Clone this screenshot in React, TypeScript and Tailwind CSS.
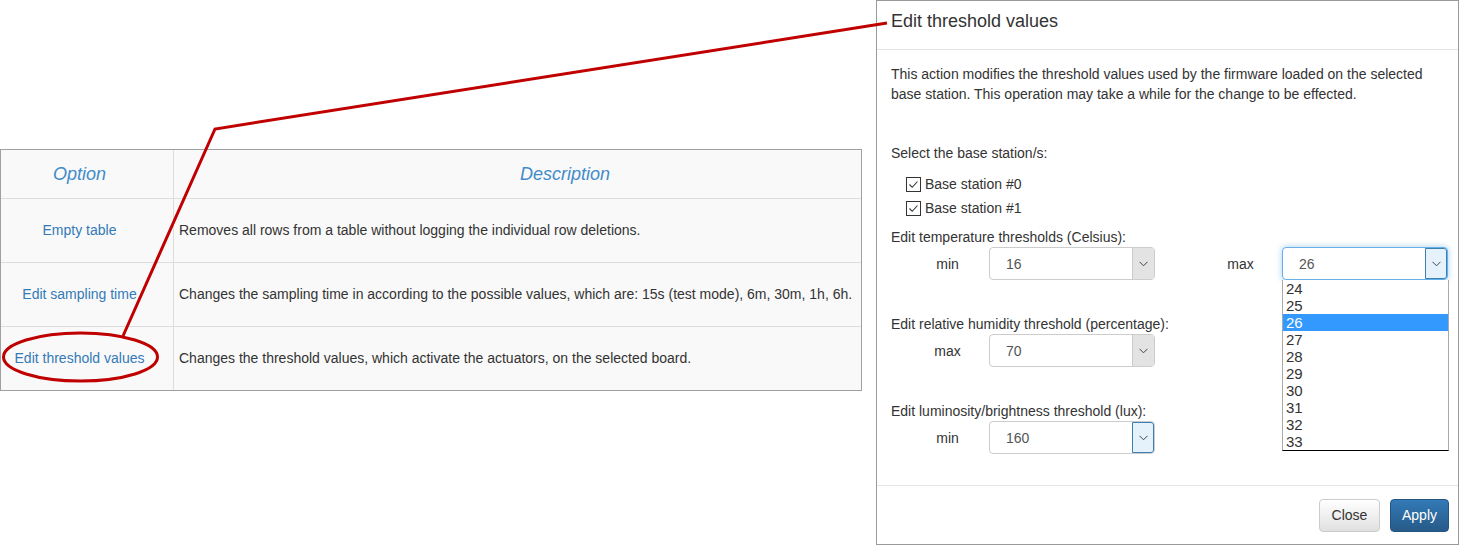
const rows = [
  {
    option: "Empty table",
    description: "Removes all rows from a table without logging the individual row deletions.",
  },
  {
    option: "Edit sampling time",
    description:
      "Changes the sampling time in according to the possible values, which are: 15s (test mode), 6m, 30m, 1h, 6h.",
  },
  {
    option: "Edit threshold values",
    description: "Changes the threshold values, which activate the actuators, on the selected board.",
  },
];

const maxOptions = ["24", "25", "26", "27", "28", "29", "30", "31", "32", "33"];

function CheckBox({ label }: { label: string }) {
  return (
    <div className="h-[24px] flex items-center pl-[15px]">
      <span className="w-[15px] h-[15px] border border-[#333] bg-white flex items-center justify-center">
        <svg width="11" height="11" viewBox="0 0 11 11">
          <path d="M1.5 5.5 L4.2 8.3 L9.5 2.5" fill="none" stroke="#333" strokeWidth="1.1" />
        </svg>
      </span>
      <span className="ml-[4px] text-[14px] text-[#333]">{label}</span>
    </div>
  );
}

function Select({
  value,
  state = "normal",
  children,
}: {
  value: string;
  state?: "normal" | "focus" | "hover";
  children?: React.ReactNode;
}) {
  const box =
    state === "focus"
      ? "border-[#66afe9] shadow-[0_0_6px_rgba(102,175,233,0.6)]"
      : "border-[#ccc]";
  const arrow =
    state === "normal"
      ? "bg-[#e3e3e3] border-l border-[#ccc]"
      : "bg-[#e5f1fb] border border-[#3c7fb1] rounded-r-[3px]";
  return (
    <div className={`relative shrink-0 w-[166px] h-[33px] border rounded-[4px] bg-white flex ${box}`}>
      <div className="flex-1 flex items-center pl-[16px] text-[14px] text-[#555]">{value}</div>
      <div className={`w-[22px] flex items-center justify-center ${arrow}`}>
        <svg width="9" height="6" viewBox="0 0 9 6">
          <path d="M0.5 0.8 L4.5 4.8 L8.5 0.8" fill="none" stroke="#444" strokeWidth="1" />
        </svg>
      </div>
      {children}
    </div>
  );
}

export default function App() {
  return (
    <div className="relative w-[1459px] h-[545px] overflow-hidden bg-white flex items-start font-['Liberation_Sans',Arial,sans-serif]">
      {/* options table */}
      <div className="mt-[149px] w-[862px] shrink-0 border border-[#a0a0a0] bg-[#f9f9f9] grid grid-cols-[173px_1fr]">
        <div className="h-[49px] border-b border-r border-[#ddd] flex items-center justify-center pr-[15px]">
          <span className="italic text-[18px] text-[#428bca]">Option</span>
        </div>
        <div className="h-[49px] border-b border-[#ddd] flex items-center pl-[346px]">
          <span className="italic text-[18px] text-[#428bca]">Description</span>
        </div>
        {rows.map((row, i) => {
          const last = i === rows.length - 1;
          return [
            <div
              key={`o${i}`}
              className={`${last ? "h-[63px]" : "h-[64px] border-b"} border-r border-[#ddd] flex items-center justify-center pr-[15px]`}
            >
              <span className="text-[14px] text-[#337ab7] whitespace-nowrap">{row.option}</span>
            </div>,
            <div
              key={`d${i}`}
              className={`${last ? "h-[63px]" : "h-[64px] border-b"} border-[#ddd] flex items-center pl-[5px]`}
            >
              <span className="text-[14px] text-[#333] whitespace-nowrap">{row.description}</span>
            </div>,
          ];
        })}
      </div>

      {/* modal */}
      <div className="ml-[14px] w-[583px] shrink-0 h-[545px] border border-[#999] bg-white flex flex-col">
        <div className="h-[49px] border-b border-[#e5e5e5] pl-[14px] pt-[10px]">
          <h4 className="text-[18px] leading-[20px] text-[#333]">Edit threshold values</h4>
        </div>
        <div className="flex-1 px-[14px] pt-[14px] text-[14px] leading-[20px] text-[#333]">
          <p className="pr-[4px]">
            This action modifies the threshold values used by the firmware loaded on the selected base station. This
            operation may take a while for the change to be effected.
          </p>
          <p className="mt-[39px]">Select the base station/s:</p>
          <div className="mt-[9px]">
            <CheckBox label="Base station #0" />
            <CheckBox label="Base station #1" />
          </div>
          <p className="mt-[7px]">Edit temperature thresholds (Celsius):</p>
          <div className="flex items-center pl-[15px]">
            <span className="shrink-0 w-[83px] text-center">min</span>
            <Select value="16" />
            <span className="shrink-0 ml-[44px] w-[83px] text-center">max</span>
            <Select value="26" state="focus">
              <div className="absolute left-[-1px] top-[32px] w-[167px] bg-white border-l border-r border-[#aaa] border-b border-b-black z-10">
                {maxOptions.map((o) => (
                  <div
                    key={o}
                    className={`h-[17px] leading-[17px] pl-[3px] text-[15px] ${o === "26" ? "bg-[#3399ff] text-white" : "text-[#333]"}`}
                  >
                    {o}
                  </div>
                ))}
              </div>
            </Select>
          </div>
          <p className="mt-[34px]">Edit relative humidity threshold (percentage):</p>
          <div className="flex items-center pl-[15px]">
            <span className="shrink-0 w-[83px] text-center">max</span>
            <Select value="70" />
          </div>
          <p className="mt-[34px]">Edit luminosity/brightness threshold (lux):</p>
          <div className="flex items-center pl-[15px]">
            <span className="shrink-0 w-[83px] text-center">min</span>
            <Select value="160" state="hover" />
          </div>
        </div>
        <div className="h-[59px] border-t border-[#e5e5e5] flex items-start justify-end gap-[10px] pt-[13px] pr-[9px]">
          <button className="w-[61px] h-[33px] rounded-[4px] border border-[#ccc] bg-gradient-to-b from-white to-[#e0e0e0] text-[14px] text-[#333]">
            Close
          </button>
          <button className="w-[59px] h-[33px] rounded-[4px] border border-[#245580] bg-gradient-to-b from-[#337ab7] to-[#265a88] text-[14px] text-white">
            Apply
          </button>
        </div>
      </div>

      {/* red annotation */}
      <svg className="absolute inset-0 pointer-events-none" width="1459" height="545">
        <polyline points="887,23 215,129 123,336" fill="none" stroke="#c00000" strokeWidth="3" />
        <ellipse cx="80.5" cy="357" rx="77" ry="24" fill="none" stroke="#c00000" strokeWidth="3" />
      </svg>
    </div>
  );
}
